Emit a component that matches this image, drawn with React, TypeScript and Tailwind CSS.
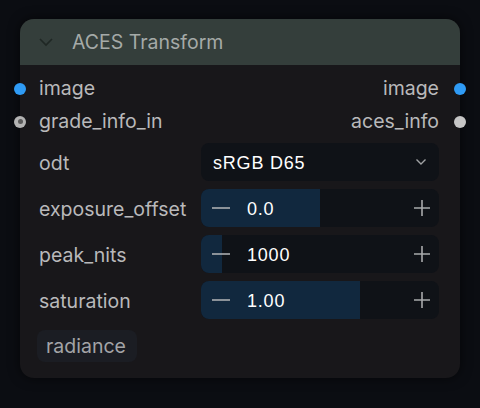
import React from "react";

const Minus = () => (
  <svg width="20" height="20" viewBox="0 0 20 20" className="shrink-0">
    <line x1="1" y1="10" x2="19" y2="10" stroke="#b4b6b8" strokeWidth="1.6" />
  </svg>
);
const Plus = () => (
  <svg width="20" height="20" viewBox="0 0 20 20" className="shrink-0">
    <line x1="2" y1="10" x2="18" y2="10" stroke="#a9abad" strokeWidth="1.6" />
    <line x1="10" y1="2" x2="10" y2="18" stroke="#a9abad" strokeWidth="1.6" />
  </svg>
);

function NumberWidget({ value, pct }: { value: string; pct: number }) {
  return (
    <div className="relative h-[38px] w-[238px] rounded-[8px] bg-[#0f1217] overflow-hidden">
      <div className="absolute left-0 top-0 bottom-0 bg-[#11283e]" style={{ width: `${pct}%` }} />
      <div className="relative flex h-full items-center pl-[10px] pr-[7px]">
        <Minus />
        <span className="ml-[16px] flex-1 pt-[2px] text-[18px] tracking-[0.8px] text-white font-['Liberation_Sans',Arial,sans-serif]">
          {value}
        </span>
        <Plus />
      </div>
    </div>
  );
}

export default function App() {
  const label = "text-[19.5px] text-[#b9b9bb] font-['Inter',sans-serif]";
  const wlabel = "pt-[3px] text-[19.5px] text-[#b9b9bb] font-['Inter',sans-serif]";
  return (
    <div className="w-[480px] h-[408px] bg-[#0b0d12] pt-[19px] pl-[20px]">
      <div className="relative w-[440px] h-[359px] rounded-[14px] bg-[#18171a] shadow-[0_0_12px_rgba(0,0,0,0.6)]">
        <div className="flex h-[46px] items-center rounded-t-[14px] bg-[#343e3b] pl-[18px]">
          <svg width="16" height="10" viewBox="0 0 16 10">
            <polyline points="2,2 8,8 14,2" fill="none" stroke="#1f2724" strokeWidth="1.6" />
          </svg>
          <span className="ml-[18px] pt-[1px] text-[19.5px] text-[#a5aaa8] font-['Inter',sans-serif]">ACES Transform</span>
        </div>
        <div className="pt-[7px] pl-[19px] pr-[21px] pb-[16px]">
          <div className="relative flex h-[33px] items-center justify-between">
            <span className="absolute left-[-25px] h-[12px] w-[12px] rounded-full bg-[#2f9bf5]" />
            <span className={label}>image</span>
            <span className={label}>image</span>
            <span className="absolute right-[-27px] h-[12px] w-[12px] rounded-full bg-[#2f9bf5]" />
          </div>
          <div className="relative flex h-[33px] items-center justify-between">
            <span className="absolute left-[-25px] flex h-[12px] w-[12px] items-center justify-center rounded-full bg-[#b3b3b3]">
              <span className="h-[5px] w-[5px] rounded-full bg-[#5a5a5a]" />
            </span>
            <span className={label}>grade_info_in</span>
            <span className={label}>aces_info</span>
            <span className="absolute right-[-27px] h-[12px] w-[12px] rounded-full bg-[#c6c6c6]" />
          </div>
          <div className="mt-[5px] flex flex-col gap-[8px]">
            <div className="flex items-center justify-between">
              <span className={wlabel}>odt</span>
              <div className="flex h-[38px] w-[238px] items-center justify-between rounded-[8px] bg-[#0f1217] pl-[12px] pr-[12px]">
                <span className="pt-[2px] text-[18px] tracking-[0.8px] text-white font-['Liberation_Sans',Arial,sans-serif]">sRGB D65</span>
                <svg width="12" height="8" viewBox="0 0 12 8">
                  <polyline points="1.5,1.5 6,6 10.5,1.5" fill="none" stroke="#a0a2a4" strokeWidth="1.4" />
                </svg>
              </div>
            </div>
            <div className="flex items-center justify-between">
              <span className={wlabel}>exposure_offset</span>
              <NumberWidget value="0.0" pct={50} />
            </div>
            <div className="flex items-center justify-between">
              <span className={wlabel}>peak_nits</span>
              <NumberWidget value="1000" pct={9} />
            </div>
            <div className="flex items-center justify-between">
              <span className={wlabel}>saturation</span>
              <NumberWidget value="1.00" pct={67} />
            </div>
          </div>
          <div className="mt-[11px] ml-[-2px] flex">
            <div className="flex h-[32px] items-center rounded-[8px] bg-[#1b1d23] pl-[9px] pr-[11px]">
              <span className="pt-[1px] text-[19.5px] text-[#a3a4a7] font-['Inter',sans-serif]">radiance</span>
            </div>
          </div>
        </div>
      </div>
    </div>
  );
}
